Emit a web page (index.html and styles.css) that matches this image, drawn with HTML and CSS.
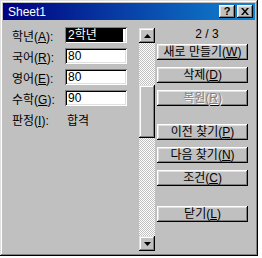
FILE: index.html
```html
<!DOCTYPE html>
<html lang="ko">
<head>
    <meta charset="UTF-8">
    <title>Sheet1</title>
    <link rel="stylesheet" href="styles.css">
</head>
<body>

<div class="window">
    <div class="titlebar">
        <span class="title">Sheet1</span>
        <div class="caption-buttons">
            <span class="cap-btn help">?</span>
            <span class="cap-btn close">
                <svg width="8" height="7" viewBox="0 0 8 7"><path d="M0 0h2l2 2.5L6 0h2L5 3.5 8 7H6L4 4.5 2 7H0l3-3.5z" fill="#000"/></svg>
            </span>
        </div>
    </div>

    <div class="content">
        <div class="fields">
            <div class="row">
                <label>학년(<u>A</u>):</label>
                <div class="field"><span class="selected">2학년</span></div>
            </div>
            <div class="row">
                <label>국어(<u>R</u>):</label>
                <div class="field">80</div>
            </div>
            <div class="row">
                <label>영어(<u>E</u>):</label>
                <div class="field">80</div>
            </div>
            <div class="row">
                <label>수학(<u>G</u>):</label>
                <div class="field">90</div>
            </div>
            <div class="row result">
                <label>판정(<u>I</u>):</label>
                <span class="value">합격</span>
            </div>
        </div>

        <div class="scrollbar">
            <div class="scroll-btn">
                <svg width="7" height="4" viewBox="0 0 7 4"><path d="M3.5 0L7 4H0z" fill="#000"/></svg>
            </div>
            <div class="track">
                <div class="thumb"></div>
            </div>
            <div class="scroll-btn">
                <svg width="7" height="4" viewBox="0 0 7 4"><path d="M0 0h7L3.5 4z" fill="#000"/></svg>
            </div>
        </div>

        <div class="side">
            <div class="counter">2 / 3</div>
            <button>새로 만들기(<u>W</u>)</button>
            <button>삭제(<u>D</u>)</button>
            <button class="disabled">복원(<u>R</u>)</button>
            <button class="group-start">이전 찾기(<u>P</u>)</button>
            <button>다음 찾기(<u>N</u>)</button>
            <button>조건(<u>C</u>)</button>
            <button class="close-btn">닫기(<u>L</u>)</button>
        </div>
    </div>
</div>

</body>
</html>
```

FILE: styles.css
```css
body {
    margin: 0;
    background-color: #fff;
    font-family: 'Liberation Sans', 'Noto Sans CJK KR', sans-serif;
    font-size: 12px;
    color: #000;
}
.window {
    width: 258px;
    height: 256px;
    box-sizing: border-box;
    padding: 3px;
    background-color: #c0c0c0;
    box-shadow: inset -1px -1px #000, inset 1px 1px #dfdfdf, inset -2px -2px #808080, inset 2px 2px #fff;
}
.titlebar {
    height: 17px;
    display: flex;
    align-items: center;
    justify-content: space-between;
    padding: 0 2px 0 5px;
    background: linear-gradient(to right, #000080, #1084d0);
    color: #fff;
}
.title {
    font-size: 12px;
}
.caption-buttons {
    display: flex;
    gap: 2px;
}
.cap-btn {
    width: 16px;
    height: 13px;
    display: flex;
    align-items: center;
    justify-content: center;
    background-color: #c0c0c0;
    color: #000;
    font-weight: bold;
    font-size: 11px;
    line-height: 1;
    box-shadow: inset -1px -1px #000, inset 1px 1px #fff, inset -2px -2px #808080, inset 2px 2px #dfdfdf;
}
.content {
    display: flex;
}
.fields {
    width: 127px;
    padding: 7px 0 0 9px;
}
.row {
    display: flex;
    align-items: center;
    height: 16px;
    margin-bottom: 5px;
}
.row label {
    width: 53px;
}
.field {
    width: 62px;
    height: 16px;
    box-sizing: border-box;
    padding: 2px 3px 0 3px;
    background-color: #fff;
    line-height: 13px;
    box-shadow: inset 1px 1px #808080, inset -1px -1px #fff, inset 2px 2px #000, inset -2px -2px #dfdfdf;
}
.field .selected {
    display: block;
    margin-right: 1px;
    margin-left: -1px;
    padding-left: 1px;
    background-color: #000;
    color: #fff;
}
.row.result {
    margin-top: 1px;
}
.value {
    padding-left: 2px;
}
.scrollbar {
    width: 16px;
    height: 223px;
    margin-top: 8px;
    display: flex;
    flex-direction: column;
}
.scroll-btn {
    height: 15px;
    display: flex;
    align-items: center;
    justify-content: center;
    background-color: #c0c0c0;
    box-shadow: inset -1px -1px #000, inset 1px 1px #dfdfdf, inset -2px -2px #808080, inset 2px 2px #fff;
}
.track {
    flex: 1;
    padding-top: 42px;
    background: repeating-conic-gradient(#fff 0 25%, #c0c0c0 0 50%) 0 0 / 2px 2px;
}
.thumb {
    height: 53px;
    background-color: #c0c0c0;
    box-shadow: inset -1px -1px #000, inset 1px 1px #dfdfdf, inset -2px -2px #808080, inset 2px 2px #fff;
}
.side {
    width: 91px;
    margin-left: 2px;
    padding-top: 7px;
    display: flex;
    flex-direction: column;
}
.counter {
    height: 17px;
    line-height: 14px;
    text-align: center;
    padding-left: 9px;
}
button {
    height: 16px;
    margin-bottom: 7px;
    padding: 0;
    border: none;
    background-color: #c0c0c0;
    font-family: 'Liberation Sans', 'Noto Sans CJK KR', sans-serif;
    font-size: 12px;
    line-height: 14px;
    color: #000;
    box-shadow: inset -1px -1px #000, inset 1px 1px #fff, inset -2px -2px #808080, inset 2px 2px #dfdfdf;
}
button.disabled {
    color: #808080;
    text-shadow: 1px 1px #fff;
}
button.group-start {
    margin-top: 11px;
}
button.close-btn {
    margin-top: 13px;
}
```
